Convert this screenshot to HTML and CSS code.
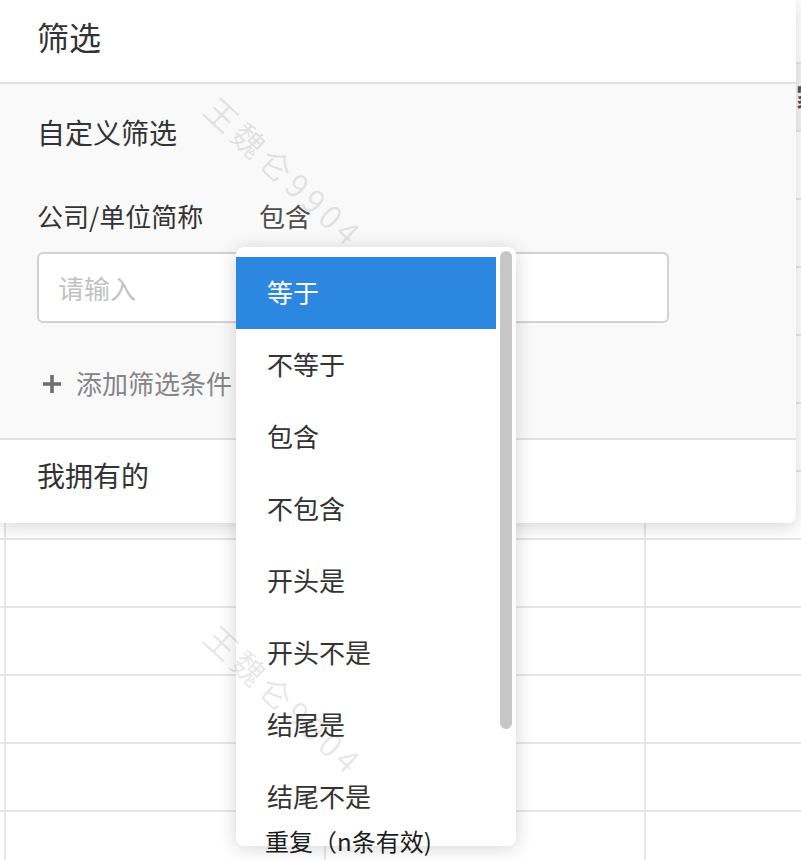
FILE: index.html
```html
<!DOCTYPE html>
<html lang="zh-CN">
<head>
<meta charset="utf-8">
<title>筛选</title>
<link rel="stylesheet" href="styles.css">
</head>
<body>
<div class="grid">
  <div class="row row-top"><div class="cell c0"></div><div class="cell c1"></div><div class="cell c2"></div><div class="cell c3"></div></div>
  <div class="row row-head"><div class="cell c0"></div><div class="cell c1"></div><div class="cell c2"></div><div class="cell c3"><span class="head-text">家庭地址</span></div></div>
  <div class="row"><div class="cell c0"></div><div class="cell c1"></div><div class="cell c2"></div><div class="cell c3"></div></div>
  <div class="row"><div class="cell c0"></div><div class="cell c1"></div><div class="cell c2"></div><div class="cell c3"></div></div>
  <div class="row"><div class="cell c0"></div><div class="cell c1"></div><div class="cell c2"></div><div class="cell c3"></div></div>
  <div class="row"><div class="cell c0"></div><div class="cell c1"></div><div class="cell c2"></div><div class="cell c3"></div></div>
  <div class="row"><div class="cell c0"></div><div class="cell c1"></div><div class="cell c2"></div><div class="cell c3"></div></div>
  <div class="row"><div class="cell c0"></div><div class="cell c1"></div><div class="cell c2"></div><div class="cell c3"></div></div>
  <div class="row"><div class="cell c0"></div><div class="cell c1"></div><div class="cell c2"></div><div class="cell c3"></div></div>
  <div class="row"><div class="cell c0"></div><div class="cell c1"></div><div class="cell c2"></div><div class="cell c3"></div></div>
  <div class="row"><div class="cell c0"></div><div class="cell c1"></div><div class="cell c2"></div><div class="cell c3"></div></div>
  <div class="row"><div class="cell c0"></div><div class="cell c1"></div><div class="cell c2"></div><div class="cell c3"></div></div>
  <div class="row"><div class="cell c0"></div><div class="cell c1"></div><div class="cell c2"></div><div class="cell c3"></div></div>
</div>

<div class="panel">
  <div class="panel-head">筛选</div>
  <div class="panel-body">
    <div class="section-title">自定义筛选</div>
    <div class="cond-row">
      <span class="cond-field">公司/单位简称</span>
      <span class="cond-op">包含</span>
    </div>
    <div class="cond-input"><span class="placeholder">请输入</span></div>
    <div class="add-row">
      <svg class="plus" width="20" height="20" viewBox="0 0 20 20" aria-hidden="true">
        <rect x="8.2" y="1" width="3.6" height="18" fill="#6f6f6f"/>
        <rect x="1" y="8.2" width="18" height="3.6" fill="#6f6f6f"/>
      </svg>
      <span class="add-text">添加筛选条件</span>
    </div>
  </div>
  <div class="panel-foot">我拥有的</div>
</div>

<div class="dropdown">
  <ul class="options">
    <li class="option selected">等于</li>
    <li class="option">不等于</li>
    <li class="option">包含</li>
    <li class="option">不包含</li>
    <li class="option">开头是</li>
    <li class="option">开头不是</li>
    <li class="option">结尾是</li>
    <li class="option">结尾不是</li>
    <li class="option-extra">重复（n条有效)</li>
  </ul>
  <div class="thumb"></div>
</div>

<div class="wm wm1">王魏仑9904</div>
<div class="wm wm2">王魏仑9904</div>
</body>
</html>
```

FILE: styles.css
```css
* { box-sizing: border-box; }

html, body {
  margin: 0;
  padding: 0;
}

body {
  width: 801px;
  height: 860px;
  overflow: hidden;
  position: relative;
  background: #ffffff;
  font-family: "Noto Sans CJK SC", "Noto Sans", sans-serif;
  color: #333333;
}

/* background table */
.grid {
  display: flex;
  flex-direction: column;
}
.row {
  display: flex;
  height: 68px;
  flex: none;
  border-bottom: 2px solid #e6e6e6;
}
.row-top { height: 64px; }
.row-head { background: #f4f4f4; }
.cell { height: 100%; }
.c0 { width: 4px; flex: none; }
.c1 { width: 320px; flex: none; border-left: 2px solid #e6e6e6; }
.c2 { width: 320px; flex: none; border-left: 2px solid #e6e6e6; }
.c3 { flex: 1; border-left: 2px solid #e6e6e6; overflow: hidden; white-space: nowrap; }
.head-text {
  display: block;
  padding-left: 150px;
  line-height: 64px;
  font-size: 26px;
  font-weight: 700;
  color: #555555;
}

/* filter panel (popover over the table) */
.panel {
  position: absolute;
  left: 0;
  top: 0;
  width: 796px;
  background: #ffffff;
  border-radius: 0 0 8px 0;
  box-shadow: 0 4px 18px rgba(0, 0, 0, 0.16);
}
.panel-head {
  padding-left: 37px;
  font-size: 32px;
  line-height: 72px;
  padding-bottom: 10px;
  border-bottom: 2px solid #e2e2e2;
  color: #333333;
}
.panel-body {
  background: #f9f9f9;
  padding: 28px 0 35px 37px;
  border-bottom: 2px solid #e2e2e2;
}
.section-title {
  font-size: 28px;
  line-height: 40px;
  color: #333333;
}
.cond-row {
  margin-top: 44px;
  display: flex;
  font-size: 26px;
  line-height: 40px;
}
.cond-field {
  width: 222px;
  color: #333333;
}
.cond-op {
  color: #4d4d4d;
}
.cond-input {
  margin-top: 16px;
  width: 632px;
  height: 71px;
  border: 2px solid #d2d2d2;
  border-radius: 6px;
  background: #ffffff;
  display: flex;
  align-items: center;
  padding-left: 19px;
}
.placeholder {
  font-size: 26px;
  color: #c2c2c2;
}
.add-row {
  margin-top: 40px;
  display: flex;
  align-items: center;
  height: 40px;
  padding-left: 5px;
}
.plus { flex: none; margin-top: 2px; }
.add-text {
  margin-left: 14px;
  font-size: 26px;
  line-height: 40px;
  color: #858585;
}
.panel-foot {
  padding: 15px 0 28px 37px;
  font-size: 28px;
  line-height: 40px;
  color: #333333;
}

/* operator dropdown */
.dropdown {
  position: absolute;
  left: 236px;
  top: 247px;
  width: 280px;
  height: 599px;
  background: #ffffff;
  border-radius: 8px;
  box-shadow: 0 2px 18px rgba(0, 0, 0, 0.17);
  padding-top: 10px;
}
.options {
  list-style: none;
  margin: 0;
  padding: 0;
}
.option {
  width: 260px;
  height: 72px;
  line-height: 69px;
  padding-left: 31px;
  font-size: 26px;
  color: #333333;
}
.option.selected {
  background: #2b87df;
  color: #ffffff;
}
.option-extra {
  margin-top: -4px;
  padding-left: 29px;
  font-size: 24px;
  line-height: 24px;
  color: #1c1c1c;
  white-space: nowrap;
}
.thumb {
  position: absolute;
  top: 4px;
  right: 4px;
  width: 12px;
  height: 478px;
  border-radius: 6px;
  background: #c6c6c6;
}

/* watermark overlay */
.wm {
  position: absolute;
  left: 222px;
  font-size: 32px;
  line-height: 32px;
  letter-spacing: 5px;
  color: rgba(0, 0, 0, 0.1);
  white-space: nowrap;
  transform-origin: 0 0;
  transform: rotate(43deg);
  pointer-events: none;
}
.wm1 { top: 91px; }
.wm2 { top: 619px; }
```
